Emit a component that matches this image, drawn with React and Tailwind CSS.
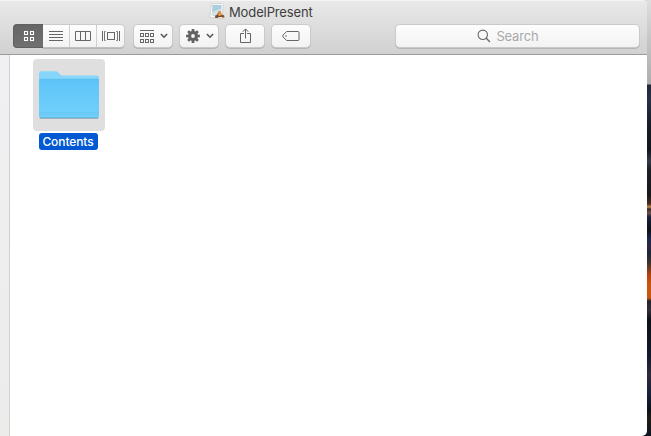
import React from 'react';

const button =
  'flex h-[22px] items-center justify-center rounded-[4px] bg-gradient-to-b from-[#fdfdfd] to-[#f2f2f2] shadow-[0_0_0_1px_#cacaca,0_1px_0_1px_#b5b5b5]';

function GridIcon() {
  return (
    <svg width="12" height="12" viewBox="0 0 12 12" fill="none" stroke="#fff" strokeWidth="1.1">
      <rect x="1.5" y="1.5" width="3" height="3" />
      <rect x="7.5" y="1.5" width="3" height="3" />
      <rect x="1.5" y="7.5" width="3" height="3" />
      <rect x="7.5" y="7.5" width="3" height="3" />
    </svg>
  );
}

function ListIcon() {
  return (
    <svg width="14" height="10" viewBox="0 0 14 10" stroke="#666" strokeWidth="1">
      <path d="M0 .5h14M0 3.5h14M0 6.5h14M0 9.5h14" />
    </svg>
  );
}

function ColumnsIcon() {
  return (
    <svg width="16" height="10" viewBox="0 0 16 10" fill="none" stroke="#666">
      <path d="M.5 .5h15v9h-15zM5.5 .5v9M10.5 .5v9" />
    </svg>
  );
}

function CoverFlowIcon() {
  return (
    <svg width="18" height="10" viewBox="0 0 18 10" fill="none" stroke="#666">
      <path d="M.5 0v10M17.5 0v10" />
      <path d="M3.7 .5H2.5v9h1.2M14.3 .5h1.2v9h-1.2" strokeWidth=".9" />
      <rect x="5.5" y="1.5" width="7" height="7" />
    </svg>
  );
}

function Chevron() {
  return (
    <svg width="8" height="6" viewBox="0 0 8 6" fill="none" stroke="#565656" strokeWidth="1.6">
      <path d="M.9 1l3.1 3.2L7.1 1" />
    </svg>
  );
}

function ArrangeIcon() {
  return (
    <svg className="mt-[2px]" width="14" height="14" viewBox="0 0 14 14" fill="none" stroke="#666">
      <path d="M0 .5h14" />
      {[0.5, 5.5, 10.5].map((x) => (
        <g key={x}>
          <rect x={x} y="3.5" width="3" height="3" />
          <rect x={x} y="9.5" width="3" height="3" />
        </g>
      ))}
    </svg>
  );
}

function GearIcon() {
  return (
    <svg width="14" height="14" viewBox="-7 -7 14 14">
      {[0, 45, 90, 135].map((a) => (
        <path key={a} d="M-1.3 -6.9h2.6l.5 6.9-.5 6.9h-2.6l-.5-6.9z" fill="#636363" transform={`rotate(${a})`} />
      ))}
      <circle r="4.9" fill="#636363" />
      <circle r="1.9" fill="#f8f8f8" />
    </svg>
  );
}

function ShareIcon() {
  return (
    <svg width="12" height="16" viewBox="0 0 12 16" fill="none" stroke="#636363">
      <path d="M4 5.5H.5v9h10v-9H7M5.5 10.5V1.2M2.7 3.8l2.8-2.9 2.8 2.9" />
    </svg>
  );
}

function TagIcon() {
  return (
    <svg width="18" height="10" viewBox="0 0 18 10" fill="none" stroke="#666">
      <path d="M4.7 .5H16q1 0 1 1v7q0 1-1 1H4.7L1.1 6.1q-.9-1.1 0-2.2z" />
      <circle cx="4" cy="5" r=".8" fill="#666" stroke="none" />
    </svg>
  );
}

function DocumentIcon() {
  return (
    <svg width="17" height="17" viewBox="0 0 17 17">
      <path d="M2.4 1L13 .5l1.2 1.3-.9 12.7-1.2 1L.9 14.3z" fill="#fff" stroke="#bdbdbd" strokeWidth=".6" />
      <path d="M3.4 2.1l9.2-.2-.7 11.3-9.1-.6z" fill="#a9cfdf" />
      <path d="M3 9l9.3-3.5-.4 7.7-9.1-.6z" fill="#d3e2e7" />
      <path d="M5.7 14.8l4.6-6.8 1.8 1-3.3 6z" fill="#9b5426" />
      <path d="M10.4 7.8l5.4 6.5-1.8 1.2-5.1-6.1z" fill="#dd8a35" />
      <path d="M6 12.6l9-.4.4 1.6-9 .7z" fill="#6b4a37" />
      <path d="M9.7 10.6h2l-.4 2H9.2z" fill="#f1b65d" />
    </svg>
  );
}

function FolderIcon() {
  return (
    <svg width="62" height="52" viewBox="0 0 62 52">
      <defs>
        <linearGradient id="folderFront" x1="0" y1="0" x2="0" y2="1">
          <stop offset="0" stopColor="#5dc4f8" />
          <stop offset="1" stopColor="#73d0fb" />
        </linearGradient>
      </defs>
      <path d="M1.5 48h59v.8q0 1.2-1.4 1.2H3q-1.5 0-1.5-1.3z" fill="#a3b1b8" />
      <path d="M1 47V4.5q0-2.3 2.3-2.3h14.3q1.5 0 2.5 1l2.1 2.2q1.2 1.2 2.8 1.2h33.5Q61 6.6 61 8.9V47z" fill="#86d5fa" />
      <path d="M1 11.5q0-1.4 1.5-1.4h57q1.5 0 1.5 1.4V47q0 2-2 2H3q-2 0-2-2z" fill="url(#folderFront)" />
      <path d="M1.5 10.1h59" stroke="#55b7e9" strokeWidth=".4" />
      <path d="M1.2 43.5h59.6M1.2 45.5h59.6" stroke="#60bce8" strokeWidth=".5" />
      <path d="M2 48.5h58" stroke="#5bb2dc" strokeWidth=".8" />
    </svg>
  );
}

function Toolbar() {
  return (
    <header className="flex h-[55px] flex-col rounded-tr-[5px] border-b border-[#9b9b9b] bg-gradient-to-b from-[#e9e9e9] to-[#d1d1d1] shadow-[inset_0_1px_0_#f5f5f5]">
      <div className="flex h-[25px] items-start pl-[209px] pt-[3px]">
        <DocumentIcon />
        <h1 className="ml-[3px] mt-px whitespace-nowrap text-[13px] font-normal leading-[17px] tracking-[-0.12px] text-[#3d3d3d]">ModelPresent</h1>
      </div>
      <div className="flex pl-[13px]">
        <button className="-mt-px flex h-6 w-[30px] items-center justify-center rounded-l-[4px] border border-r-0 border-[#5f5f5f] bg-gradient-to-b from-[#656565] to-[#707070]"><GridIcon /></button>
        <div className="flex h-[22px] w-[81px] rounded-r-[4px] bg-gradient-to-b from-[#fdfdfd] to-[#f2f2f2] shadow-[0_-1px_0_#cacaca,1px_0_0_#cacaca,0_1px_0_#c0c0c0,0_2px_0_#b5b5b5]">
          <button className="flex w-[27px] items-center justify-center border-r border-[#d0d0d0]"><ListIcon /></button>
          <button className="flex w-[27px] items-center justify-center border-r border-[#d0d0d0]"><ColumnsIcon /></button>
          <button className="flex w-[27px] items-center justify-center"><CoverFlowIcon /></button>
        </div>
        <button className={`${button} ml-[10px] w-[38px] gap-[6px] pl-[2px]`}><ArrangeIcon /><Chevron /></button>
        <button className={`${button} ml-2 w-[38px] gap-[6px] pl-px`}><GearIcon /><Chevron /></button>
        <button className={`${button} ml-2 w-[38px] pb-px pl-px`}><ShareIcon /></button>
        <button className={`${button} ml-2 w-[38px]`}><TagIcon /></button>
        <div className={`${button} ml-[86px] w-[243px] gap-[5px] pr-[19px]`}>
          <svg width="14" height="14" viewBox="0 0 14 14" fill="none" stroke="#6a6a6a" strokeWidth="1.1">
            <circle cx="5.8" cy="5.8" r="4.7" />
            <path d="M9.1 9.1l3.8 3.8" strokeWidth="1.4" />
          </svg>
          <span className="text-[13px] leading-4 tracking-[-0.15px] text-[#a9a9a9]">Search</span>
        </div>
      </div>
    </header>
  );
}

export default function App() {
  return (
    <div className="flex h-[436px] w-[651px] overflow-hidden bg-[#0d131b] bg-[linear-gradient(to_bottom,#dedede_0px,#c6c6c6_40px,#adadad_84px,#20283a_85px,#253249_99px,#171d27_125px,#11161e_150px,#343a4b_161px,#1c1e26_170px,#191719_195px,#4b2a20_204px,#c88b4f_207px,#382820_209px,#70514b_213px,#16213b_217px,#0c1118_230px,#1a294b_239px,#302840_246px,#1b2639_253px,#3f302c_263px,#b5420b_275px,#c9540f_284px,#c9560f_298px,#22252a_301px,#342d3b_310px,#0c1117_320px,#11192b_355px,#302a3c_375px,#15213a_395px,#0c1219_410px,#211c18_418px,#0d1420_436px)] font-['Inter','Liberation_Sans',sans-serif]">
      <div className="flex w-[647px] flex-col overflow-hidden rounded-br-[5px] rounded-tr-[5px]">
        <Toolbar />
        <div className="flex flex-1">
          <aside className="w-[10px] border-r border-[#d0d0d0] bg-gradient-to-b from-[#f0f0f3] to-[#ececeb]" />
          <main className="flex-1 bg-white pl-[23px] pt-1">
            <figure className="flex w-[72px] flex-col items-center">
              <div className="flex h-[72px] w-[72px] items-center justify-center rounded-[4px] bg-[#dfdfdf]"><FolderIcon /></div>
              <figcaption className="mr-[2px] mt-[2px] flex h-[17px] w-[59px] items-center justify-center rounded-[3px] bg-[#0259d3] text-[12px] font-medium leading-none tracking-[-0.1px] text-white">Contents</figcaption>
            </figure>
          </main>
        </div>
      </div>
    </div>
  );
}
